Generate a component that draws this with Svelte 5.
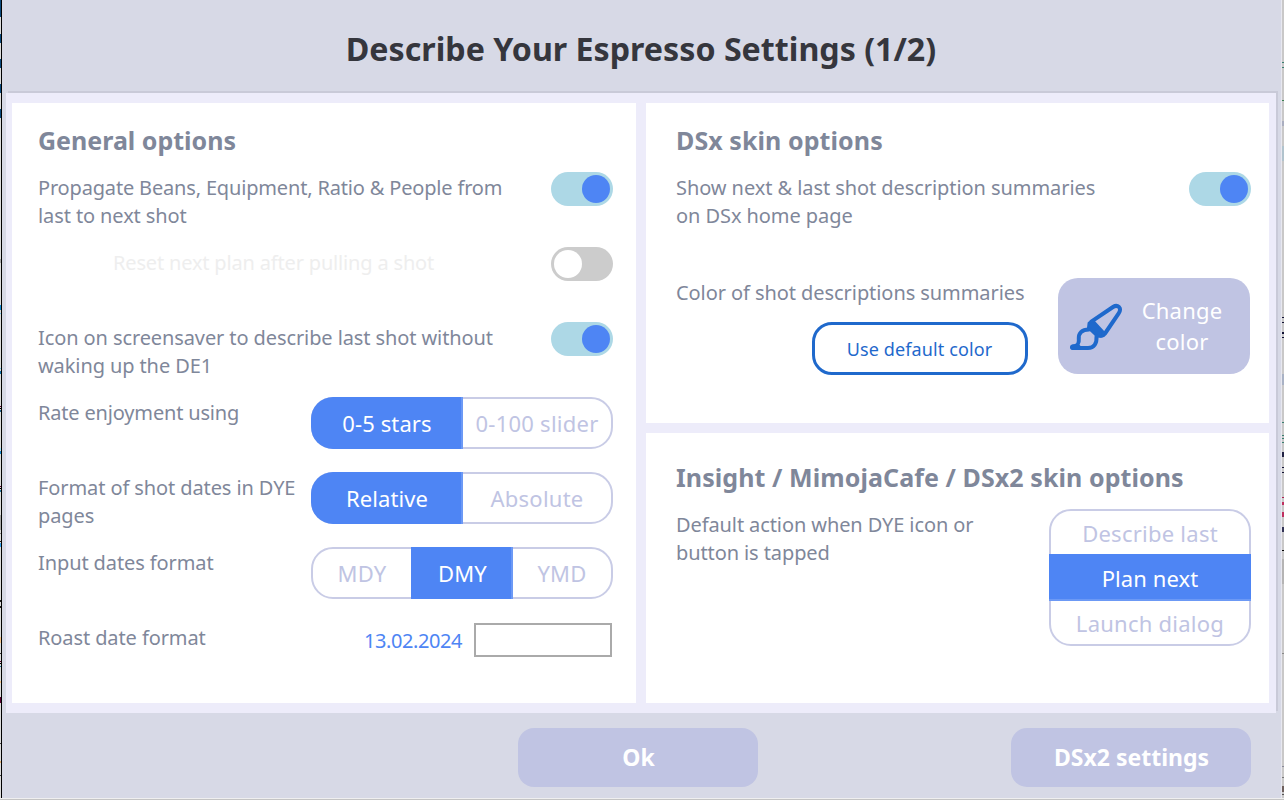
<script>
  const leftMarks = [
    [0, 17, '#0b4a7c'], [34, 9, '#0b4a7c'], [59, 9, '#0b4a7c'], [84, 9, '#0b4a7c'], [109, 9, '#0b4a7c'],
    [259, 4, '#aaa'], [305, 5, '#168bd0'], [313, 1, '#75caf0'], [368, 1, '#75caf0'], [371, 3, '#1172aa'],
    [406, 1, '#600030'], [408, 1, '#000'], [410, 2, '#23648d'], [448, 2, '#a0e4ff'], [451, 3, '#198bd0'],
    [486, 1, '#600030'], [488, 1, '#000'], [490, 2, '#2879a0'], [515, 15, '#aaa'], [533, 1, '#888'],
    [541, 1, '#222'], [543, 4, '#3aa5f0'], [600, 2, '#222'], [606, 2, '#222'], [637, 6, '#f5c58d'],
    [653, 1, '#333'], [661, 1, '#600030'], [663, 1, '#000'], [666, 1, '#237eac'], [681, 2, '#f5c58d'],
    [697, 6, '#5c0034'], [743, 1, '#444'], [761, 2, '#e3b275'], [775, 1, '#444']
  ];
  const rightMarks = [
    [62, 1, '#397f70'], [67, 1, '#397f70'], [100, 1, '#397f50'], [121, 5, '#aaaec0'], [146, 15, '#b1c3cd'],
    [317, 1, '#113'], [322, 1, '#113'], [332, 2, '#113'], [337, 1, '#113'], [374, 11, '#a9b2c5'],
    [422, 1, '#397f70'], [435, 1, '#397f70'], [438, 1, '#397f70'], [442, 1, '#397f70'], [452, 5, '#224'],
    [467, 1, '#113'], [472, 1, '#113'], [497, 1, '#b02050'], [502, 3, '#c03060'], [512, 5, '#c03060'],
    [527, 5, '#335'], [550, 1, '#000'], [559, 25, '#b5b4b4'], [653, 1, '#888'], [766, 1, '#889'],
    [777, 1, '#777'], [786, 6, '#6f605c'], [794, 1, '#555']
  ];
</script>

{#snippet toggle(on)}
  <span class="toggle" class:on><i></i></span>
{/snippet}

{#snippet choices(items, active, column)}
  <div class="seg" class:column class:three={items.length === 3}>
    {#each items as item, n}
      <button class:active={n === active}><span>{item}</span></button>
    {/each}
  </div>
{/snippet}

{#snippet edge(marks)}
  {#each marks as [y, h, color]}<i style="top:{y}px;height:{h}px;background:{color}"></i>{/each}
{/snippet}

<div class="window">
  <div class="edge left">{@render edge(leftMarks)}</div>
  <main>
    <header><h1>Describe Your Espresso Settings (1/2)</h1></header>
    <section class="body">
      <div class="card general">
        <h2>General options</h2>
        <div class="row"><p><span class="tight">Propagate Beans, Equipment, Ratio &amp; People from</span><br />last to next shot</p>{@render toggle(true)}</div>
        <div class="row disabled"><p class="tight">Reset next plan after pulling a shot</p>{@render toggle(false)}</div>
        <div class="row"><p>Icon on screensaver to describe last shot without<br />waking up the DE1</p>{@render toggle(true)}</div>
        <div class="row"><p class="tight">Rate enjoyment using</p>{@render choices(['0-5 stars', '0-100 slider'], 0, false)}</div>
        <div class="row"><p>Format of shot dates in DYE<br />pages</p>{@render choices(['Relative', 'Absolute'], 0, false)}</div>
        <div class="row"><p>Input dates format</p>{@render choices(['MDY', 'DMY', 'YMD'], 1, false)}</div>
        <div class="row"><p>Roast date format</p><div class="date"><span>13.02.2024</span><input aria-label="Roast date format" /></div></div>
      </div>
      <div class="stack">
        <div class="card dsx">
          <h2>DSx skin options</h2>
          <div class="row"><p class="loose">Show next &amp; last shot description summaries<br />on DSx home page</p>{@render toggle(true)}</div>
          <div class="colors">
            <div class="colorleft">
              <p class="loose">Color of shot descriptions summaries</p>
              <button class="outline">Use default color</button>
            </div>
            <button class="change">
              <svg width="54" height="50" viewBox="0 0 54 50" fill="none" stroke="#1f69cc" stroke-width="4" stroke-linecap="round" stroke-linejoin="round">
                <path d="M22.300 19.600 44 5Q47.500 2.800 50 5Q52.300 7.500 49.500 11.700L36 31.500Q34.200 34 31.500 33.800" />
                <path d="M19.800 20.800 24.300 19 34.700 30.200 33 34.200 28.500 34.600 19.200 25.800Z" fill="#1f69cc" stroke-width="2.400" />
                <path d="M20 27.500C12.500 27.500 9.500 31.500 9.800 36.500C10.200 41 9.500 44 4 44.500V46H19C25 46 28 41.500 27.500 34.500" />
                <path d="M3.700 45.300H9" stroke-width="5.400" />
              </svg>
              <span>Change<br />color</span>
            </button>
          </div>
        </div>
        <div class="card insight">
          <h2>Insight / MimojaCafe / DSx2 skin options</h2>
          <div class="row"><p>Default action when DYE icon or<br />button is tapped</p>{@render choices(['Describe last', 'Plan next', 'Launch dialog'], 1, true)}</div>
        </div>
      </div>
    </section>
    <footer>
      <button>Ok</button>
      <button>DSx2 settings</button>
    </footer>
  </main>
  <div class="edge right">{@render edge(rightMarks)}</div>
</div>

<style>
  :global(body) { margin: 0; overflow: hidden; }
  * { box-sizing: border-box; }
  .window { width: 1284px; height: 800px; display: grid; grid-template-columns: 2px 1279px 3px; grid-template-rows: 798px; font-family: "Noto Sans", sans-serif; background: linear-gradient(#efefef 0 799px, #c4c4c4 799px); color: #7f879a; }
  .edge { position: relative; }
  .edge i { position: absolute; width: 1px; left: 0; }
  .left { border-right: 1px solid #000; background: #ddd; }
  .right { border-left: 1px solid #e8e8f0; background: #c9c8c8; }
  .right i { width: 2px; }
  main { background: #d7d9e6; display: flex; flex-direction: column; }
  header { height: 93px; padding-top: 26px; text-align: center; }
  h1, h2, p { margin: 0; }
  h1 { font-size: 32.200px; line-height: 46px; color: #35363d; padding-right: 1px; }
  .body { height: 620px; width: 1270px; margin-left: 4px; padding: 10px 7px 10px 6px; display: grid; grid-template-columns: 624px 623px; gap: 10px; background: #edecfa; box-shadow: 2px -2px 0 #c9cad8; }
  .stack { display: grid; grid-template-rows: 320px 270px; gap: 10px; }
  .card { background: #fff; padding: 21px 23px 0 26px; }
  .stack .card { padding-left: 30px; padding-right: 18px; }
  .stack .insight { padding-top: 28px; }
  h2 { font-size: 25px; line-height: 32px; height: 50px; white-space: nowrap; }
  .stack h2 { letter-spacing: .08px; }
  p { font-size: 20px; line-height: 28px; white-space: nowrap; letter-spacing: -.1px; }
  .tight { letter-spacing: -.17px; }
  .loose { letter-spacing: -.07px; }
  .row { height: 75px; display: flex; justify-content: space-between; align-items: flex-start; }
  .disabled p { color: #eee; padding-left: 75px; }
  .toggle { width: 62px; height: 34px; margin-top: -2px; padding: 3px; border-radius: 17px; background: #ccc; display: flex; }
  .toggle.on { background: #add8e6; justify-content: flex-end; }
  .toggle i { width: 28px; height: 28px; border-radius: 50%; background: #fff; }
  .on i { background: #4e85f4; }
  button { font: inherit; border: 0; margin: 0; padding: 0; background: none; }
  .seg { width: 302px; height: 52px; margin-top: -2px; border: 2px solid #c9cce6; border-radius: 22px; display: grid; grid-template-columns: 150px 148px; flex: none; }
  .seg.three { grid-template-columns: 98px 102px 98px; }
  .seg button { color: #c0c4e3; font-size: 22px; line-height: 28px; display: flex; align-items: center; justify-content: center; white-space: nowrap; letter-spacing: .25px; }
  .seg .active { background: #4e85f4; color: #fff; margin: -2px 0; border-right: 2px solid #6c99f5; padding-left: 3px; letter-spacing: .1px; }
  .seg .active:first-child { margin-left: -2px; border-radius: 22px 0 0 22px; padding-left: 2px; }
  .seg.column { width: 202px; height: 137px; margin-top: -2px; grid-template-columns: 198px; grid-template-rows: 43px 47px 43px; }
  .column .active { margin: 0 -2px; border: 0; border-bottom: 2px solid #6c99f5; padding: 2px 0 0; }
  .date { width: 248px; display: flex; justify-content: space-between; margin: -1px 1px 0 0; color: #4e85f4; font-size: 20px; }
  .date span { line-height: 36px; letter-spacing: -.43px; }
  .date input { width: 138px; height: 34px; border: 2px solid #aaa; background: #fff; padding: 0; }
  .dsx .row { height: 104px; }
  .colors { display: flex; justify-content: space-between; padding-right: 1px; }
  .colorleft { width: 352px; padding-top: 1px; display: flex; flex-direction: column; align-items: flex-end; }
  .colorleft p { align-self: flex-start; }
  .outline { width: 216px; height: 53px; margin: 15px .5px 0 0; border: 3px solid #1f69cc; border-radius: 20px; color: #1f69cc; font-size: 18px; letter-spacing: .12px; }
  .change { width: 192px; height: 96px; border-radius: 20px; background: #c0c4e3; color: #fff; display: flex; align-items: center; padding-left: 11px; font-size: 22px; line-height: 31px; letter-spacing: .2px; }
  .change span { width: 118px; text-align: center; }
  .change svg { flex: none; margin-top: 1px; }
  footer { display: flex; justify-content: flex-end; gap: 253px; padding: 15px 30px 0 0; }
  footer button { width: 240px; height: 59px; border-radius: 16px; background: #c0c4e3; color: #fff; font-size: 23px; font-weight: 700; padding: 0 0 1px 1px; }
</style>
